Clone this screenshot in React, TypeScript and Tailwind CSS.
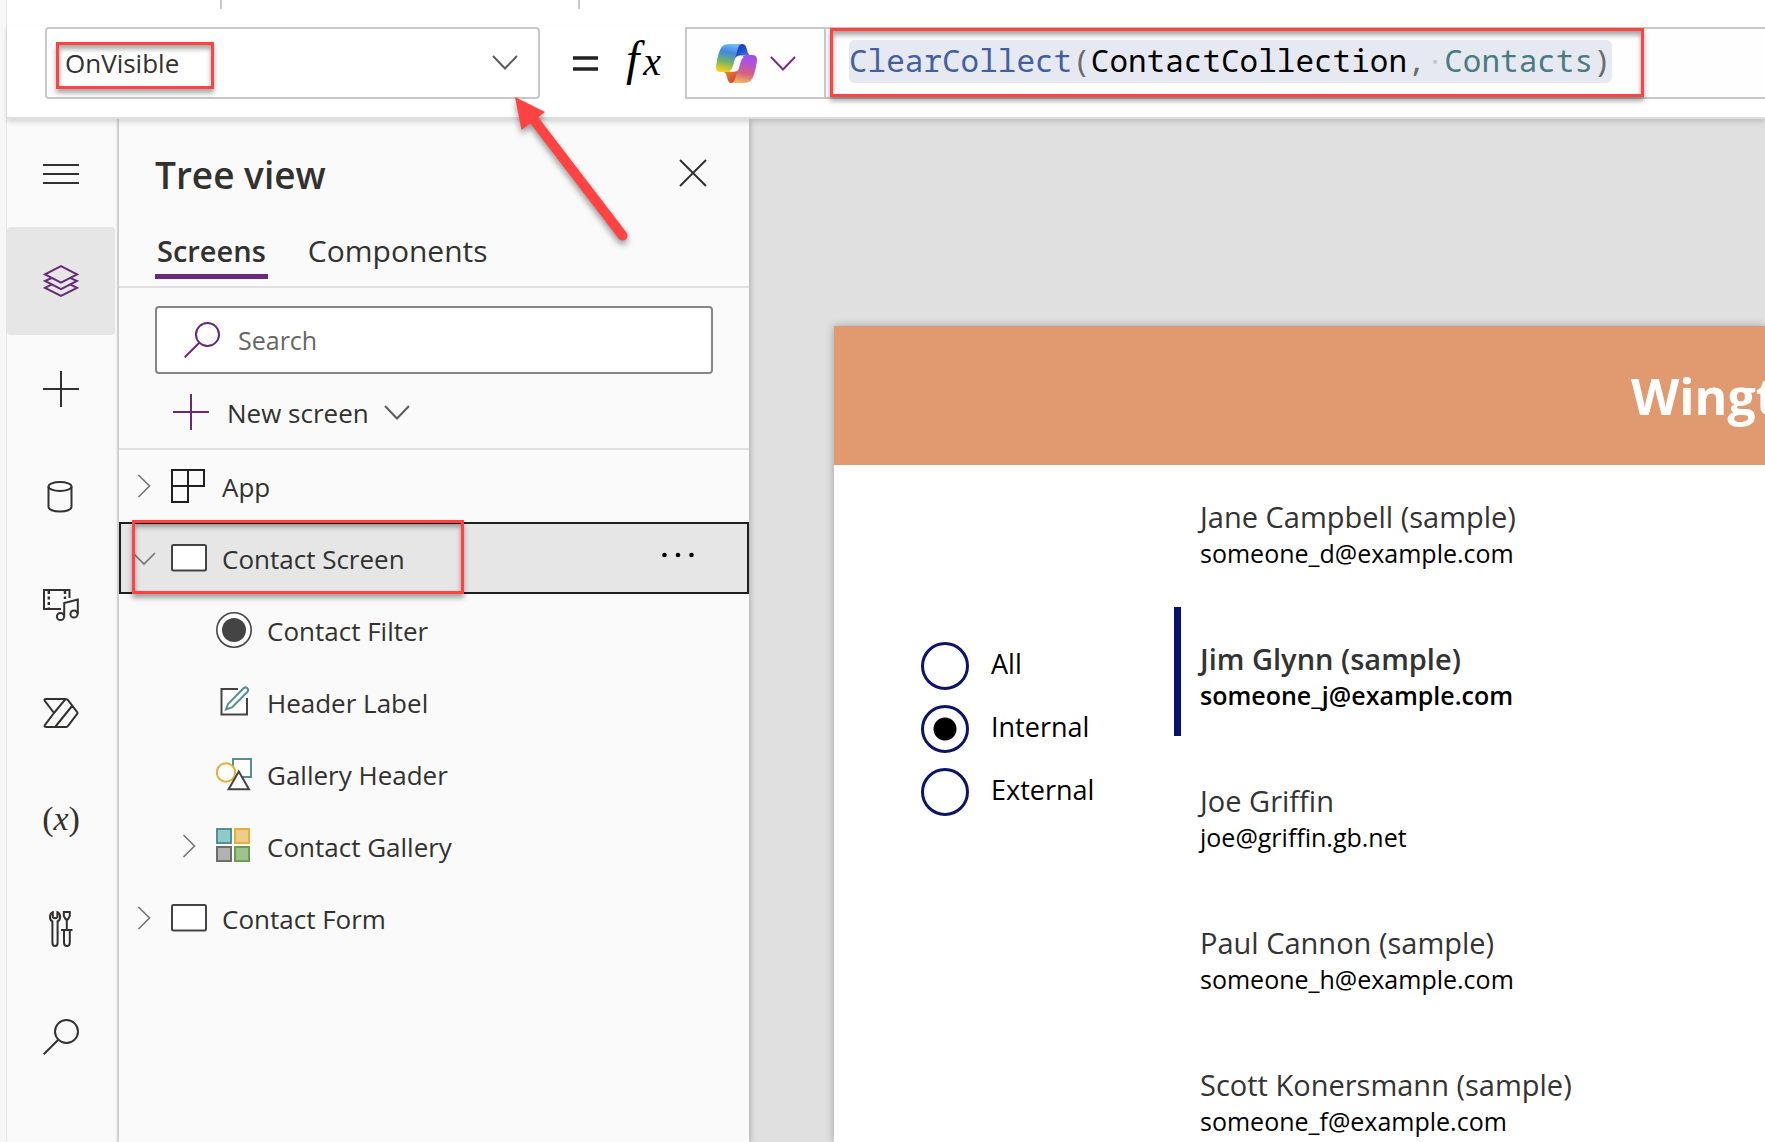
import React from "react";

type IconProps = { className?: string };

function Svg({ w, h, className = "", children }: { w: number; h: number; className?: string; children: React.ReactNode }) {
  return (
    <svg
      width={w}
      height={h}
      viewBox={`0 0 ${w} ${h}`}
      fill="none"
      stroke="currentColor"
      strokeWidth="2"
      aria-hidden="true"
      className={"shrink-0 " + className}
    >
      {children}
    </svg>
  );
}

const MenuIcon = () => (
  <Svg w={36} h={36}>
    <path d="M0 10H36M0 19H36M0 28H36" />
  </Svg>
);

const LayersIcon = () => (
  <Svg w={36} h={36}>
    <path d="M18 3.2L34 11.4L18 19.6L2 11.4Z" />
    <path d="M9 14.8L2 18L18 26.2L34 18L27 14.8" />
    <path d="M9 21.4L2 24.8L18 33L34 24.8L27 21.4" />
  </Svg>
);

const PlusIcon = ({ className = "" }: IconProps) => (
  <Svg w={36} h={36} className={className}>
    <path d="M0 18H36M18 0V36" />
  </Svg>
);

const DatabaseIcon = () => (
  <Svg w={36} h={36}>
    <ellipse cx="17" cy="7.5" rx="11.5" ry="4.5" />
    <path d="M5.500 7.500V28C5.500 30.600 10.600 32.500 17 32.500S28.500 30.600 28.500 28V7.500" />
  </Svg>
);

const MediaIcon = () => (
  <Svg w={36} h={36}>
    <path d="M18 22H1V3H26.500V11" />
    <path d="M5.800 4V22M22 4V12" strokeDasharray="3 2.500" strokeWidth="2.400" />
    <circle cx="17.500" cy="29.500" r="3.600" />
    <circle cx="31" cy="27" r="3.600" />
    <path d="M21.200 29.500V16L34.800 12.600V27" />
  </Svg>
);

const FlowIcon = () => (
  <Svg w={36} h={36}>
    <path
      d="M3 4H22.500Q24 4 25 5.200L34 16.800Q35 18 34 19.200L25 30.800Q24 32 22.500 32H3Q.6 32 2 29.800L11 18L2 6.200Q.6 4 3 4ZM11 18L22.500 4.200M12.500 31.500L29 11"
      strokeLinejoin="round"
    />
  </Svg>
);

const ToolsIcon = () => (
  <Svg w={36} h={36}>
    <path d="M9.800 1.200C5.900 3.200 6.200 8.600 9.400 10.400V31.500Q9.400 35 12 35T14.600 31.500V10.400C18 8.600 18.100 3.200 14.400 1.200V6.200Q12 8.200 9.800 6.200Z" />
    <path d="M20.800 1H26.800V5L25 8.300H22.600L20.800 5ZM23.800 8.500V19M18 19H29.500M21 19V31.500Q21 35 23.900 35T26.800 31.500V19" />
  </Svg>
);

const SearchIcon = ({ className = "" }: IconProps) => (
  <Svg w={36} h={36} className={className}>
    <circle cx="23.500" cy="12.500" r="11.500" />
    <path d="M15.300 20.700L.7 35.300" />
  </Svg>
);

const ChevronDown = ({ className = "" }: IconProps) => (
  <Svg w={26} h={15} className={className}>
    <path d="M1 1L13 13.500L25 1" />
  </Svg>
);

const TreeChevron = ({ open = false }: { open?: boolean }) => (
  <Svg w={24} h={24} className="text-[#757575]">
    {open ? <path d="M1 7L12 18L23 7" strokeWidth="1.600" /> : <path d="M6.500 1L17.500 12L6.500 23" strokeWidth="1.600" />}
  </Svg>
);

const CloseIcon = () => (
  <Svg w={28} h={28} className="text-[#323130]">
    <path d="M1 1L27 27M27 1L1 27" />
  </Svg>
);

const CopilotIcon = () => (
  <svg width="41" height="39" viewBox="0 0 41 39" aria-hidden="true" className="shrink-0">
    <defs>
      <linearGradient id="ribbonA" x1="0.600" y1="0" x2="0.400" y2="1">
        <stop offset="0" stopColor="#6fbdf7" />
        <stop offset="0.300" stopColor="#4388e0" />
        <stop offset="0.650" stopColor="#6fb46a" />
        <stop offset="1" stopColor="#fbd011" />
      </linearGradient>
      <linearGradient id="foldA" x1="0" y1="0" x2="1" y2="1">
        <stop offset="0" stopColor="#1c2fae" />
        <stop offset="0.500" stopColor="#2450d0" />
        <stop offset="1" stopColor="#4a9bf5" />
      </linearGradient>
      <linearGradient id="ribbonB" x1="0.600" y1="0" x2="0.400" y2="1">
        <stop offset="0" stopColor="#9a4df0" />
        <stop offset="0.300" stopColor="#b455cf" />
        <stop offset="0.650" stopColor="#d8607f" />
        <stop offset="1" stopColor="#f0b660" />
      </linearGradient>
      <linearGradient id="foldB" x1="0" y1="0" x2="1" y2="1">
        <stop offset="0" stopColor="#f0a030" />
        <stop offset="0.600" stopColor="#d65a30" />
        <stop offset="1" stopColor="#c23a3a" />
      </linearGradient>
    </defs>
    <path d="M20 0H26Q29.500 0 30.500 4L32 9Q33 11.500 36 11.500H24Q20.500 11.500 19.500 14L17 12Z" fill="url(#foldA)" />
    <path d="M21 39H15Q12.500 39 11.500 35L10 30Q9 27.500 6 27.500H17Q20.500 27.500 21.500 25L24 27Z" fill="url(#foldB)" />
    <path d="M14 0H26Q23 .5 22 4L17 22Q15.300 28 10 28H5Q-1 28 .2 21Q2 9 5 4Q7 0 14 0Z" fill="url(#ribbonA)" />
    <path d="M27 39H15Q18 38.500 19 35L24 17Q25.700 11 31 11H36Q42 11 40.800 18Q39 30 36 35Q34 39 27 39Z" fill="url(#ribbonB)" />
    <path d="M24 13H28Q26 14 25 17L22.500 25.500Q21.500 27.500 19 27.500H13.500Q16.500 26 17.500 22L19.500 16Q20.500 13 24 13Z" fill="#fff" />
  </svg>
);

const AppIcon = () => (
  <Svg w={36} h={36} className="text-[#201f1e]">
    <path d="M1 2H33V18H1ZM1 18V34H17V2" fill="#fafafa" />
  </Svg>
);

const ScreenIcon = () => (
  <Svg w={36} h={36} className="text-[#444]">
    <rect x="1" y="5" width="34" height="25.500" rx="1.500" fill="#fff" />
  </Svg>
);

const RadioIcon = () => (
  <Svg w={36} h={36} className="text-[#444]">
    <circle cx="18" cy="18" r="17.200" fill="#fff" strokeWidth="1.600" />
    <circle cx="18" cy="18" r="12" fill="#444" stroke="none" />
  </Svg>
);

const LabelIcon = () => (
  <Svg w={36} h={36} className="text-[#444]">
    <path d="M5.500 5H31V30.500H5.500Z" fill="#fff" stroke="none" />
    <path d="M22 5H5.500V30.500H31V14" />
    <path d="M10 25.500L12 20L27.500 4.200Q29.500 2.500 31.300 4.200T31.300 8L16 23.500Z" stroke="#54908f" fill="#fff" />
  </Svg>
);

const ShapesIcon = () => (
  <Svg w={36} h={36} className="text-[#444]">
    <rect x="17" y="3" width="18" height="18" fill="#fff" stroke="#54908f" />
    <circle cx="10" cy="16.500" r="9.200" fill="#fff" stroke="#e3ae3e" />
    <path d="M22.800 15.500L33 33.300H12.600Z" fill="#fff" />
  </Svg>
);

const GalleryIcon = () => (
  <Svg w={36} h={36}>
    <rect x="1" y="1" width="14" height="14" fill="#8fcaca" stroke="#54908f" />
    <rect x="19" y="1" width="14" height="14" fill="#edcd87" stroke="#e3ae3e" />
    <rect x="1" y="19" width="14" height="14" fill="#b1b1b1" stroke="#6d6d6d" />
    <rect x="19" y="19" width="14" height="14" fill="#9dc28d" stroke="#689f48" />
  </Svg>
);

const VariableIcon = () => (
  <span className="pb-1 font-['Liberation_Serif'] text-[34px] leading-none">
    (<i>x</i>)
  </span>
);

const railItems = [
  { label: "Menu", icon: <MenuIcon /> },
  { label: "Tree view", icon: <LayersIcon />, active: true },
  { label: "Insert", icon: <PlusIcon /> },
  { label: "Data", icon: <DatabaseIcon /> },
  { label: "Media", icon: <MediaIcon /> },
  { label: "Power Automate", icon: <FlowIcon /> },
  { label: "Variables", icon: <VariableIcon /> },
  { label: "Advanced tools", icon: <ToolsIcon /> },
  { label: "Search", icon: <SearchIcon /> },
];

/** Red call-out frame drawn over the element it marks. */
const Callout = ({ className }: IconProps) => (
  <span
    className={
      "pointer-events-none absolute z-10 border-3 border-[#ff4343] shadow-[0_4px_5px_rgba(0,0,0,0.35),inset_0_4px_5px_rgba(0,0,0,0.35)] " +
      className
    }
  />
);

function FormulaBar() {
  return (
    <header className="relative z-10 flex h-[93px] shrink-0 items-start border-b-2 border-[#dedede] bg-white pl-[38px] shadow-[0_3px_5px_rgba(0,0,0,0.14)]">
      <div className="relative mt-px flex h-18 w-[495px] items-center rounded border-2 border-[#c8c8c8] bg-white">
        <select aria-label="Property" className="h-full w-full appearance-none bg-transparent pl-[18px] text-[26px] text-[#323130] outline-none">
          <option>OnVisible</option>
        </select>
        <ChevronDown className="pointer-events-none absolute top-[26px] right-[20px] text-[#5c5c5c]" />
        <Callout className="top-[13px] left-[9px] h-[47px] w-[158px]" />
      </div>
      <div className="mt-px flex h-18 w-[145px] items-center pl-[33px]">
        <Svg w={25} h={18} className="text-[#222]">
          <path d="M0 4H25M0 15H25" strokeWidth="3.400" />
        </Svg>
        <span className="ml-7 flex items-baseline gap-1 pb-2 font-['Liberation_Serif'] italic leading-none text-black">
          <span className="text-[48px]">f</span>
          <span className="text-[40px]">x</span>
        </span>
      </div>
      <div className="mt-px flex h-18 min-w-0 flex-1 border-2 border-r-0 border-[#c8c8c8] bg-[#fefefe]">
        <button aria-label="Copilot" className="flex w-[139px] shrink-0 items-center gap-[13px] border-r-2 border-[#c8c8c8] pl-[29px]">
          <CopilotIcon />
          <ChevronDown className="text-[#7b2a90]" />
        </button>
        <div className="relative flex items-start pl-[23px]">
          <div
            role="textbox"
            aria-label="Formula"
            className="mt-[11px] h-[43px] rounded-md bg-[#e6e9f1] font-['Noto_Sans_Mono','Liberation_Mono',monospace] text-[31px] leading-[41px] whitespace-nowrap text-black"
          >
            <span className="text-[#425fa0]">ClearCollect</span>
            <span className="text-[#6b6b6b]">(</span>
            ContactCollection
            <span className="text-[#6b6b6b]">,</span>
            <span className="text-[#c4c6cb]">·</span>
            <span className="text-[#4a7b82]">Contacts</span>
            <span className="text-[#6b6b6b]">)</span>
          </div>
          <Callout className="-top-px left-1 h-[69px] w-[814px]" />
        </div>
      </div>
    </header>
  );
}

function Rail() {
  return (
    <nav aria-label="App authoring" className="flex w-28 shrink-0 flex-col border-r-2 border-[#dedede] bg-[#fafafa] text-[#323130]">
      {railItems.map((item) => (
        <button
          key={item.label}
          aria-label={item.label}
          className={"flex h-27 w-27 shrink-0 items-center justify-center rounded " + (item.active ? "bg-[#e6e6e6] text-[#68297a]" : "")}
        >
          {item.icon}
        </button>
      ))}
    </nav>
  );
}

type Node = { name: string; icon: React.ReactNode; child?: boolean; chevron?: "open" | "closed"; selected?: boolean };

const nodes: Node[] = [
  { name: "App", icon: <AppIcon />, chevron: "closed" },
  { name: "Contact Screen", icon: <ScreenIcon />, chevron: "open", selected: true },
  { name: "Contact Filter", icon: <RadioIcon />, child: true },
  { name: "Header Label", icon: <LabelIcon />, child: true },
  { name: "Gallery Header", icon: <ShapesIcon />, child: true },
  { name: "Contact Gallery", icon: <GalleryIcon />, child: true, chevron: "closed" },
  { name: "Contact Form", icon: <ScreenIcon />, chevron: "closed" },
];

function TreeRow({ node }: { node: Node }) {
  return (
    <li
      role="treeitem"
      aria-selected={!!node.selected}
      className={
        "relative flex h-18 items-center border-2 " +
        (node.child ? "pl-[56px] " : "pl-[11px] ") +
        (node.selected ? "border-[#201f1e] bg-[#e6e6e6]" : "border-transparent")
      }
    >
      <span className="mr-[15px] flex w-6 shrink-0 items-center">
        {node.chevron && <TreeChevron open={node.chevron === "open"} />}
      </span>
      {node.icon}
      <span className="ml-[15px] flex-1 pt-0.5 text-[26px] leading-9">{node.name}</span>
      {node.selected && (
        <>
          <button aria-label="More actions" className="mr-[53px] pb-1.5">
            <svg width="32" height="6" viewBox="0 0 32 6" aria-hidden="true">
              <circle cx="2.500" cy="3" r="2.300" />
              <circle cx="16" cy="3" r="2.300" />
              <circle cx="29.500" cy="3" r="2.300" />
            </svg>
          </button>
          <Callout className="-top-1 left-[11px] h-[74px] w-[332px]" />
        </>
      )}
    </li>
  );
}

function TreePanel() {
  return (
    <aside className="z-[5] flex w-[630px] shrink-0 flex-col bg-[#fafafa] text-[#323130] shadow-[1px_0_6px_rgba(0,0,0,0.25)]">
      <div className="flex h-[108px] items-center justify-between pr-[42px] pl-9">
        <h1 className="pt-1 text-[37px] font-semibold">Tree view</h1>
        <button aria-label="Close">
          <CloseIcon />
        </button>
      </div>
      <div role="tablist" className="flex h-[61px] items-start gap-10 border-b-2 border-[#e0e0e0] pl-9 text-[30px] leading-[48px]">
        <button role="tab" aria-selected="true" className="h-[52px] border-b-5 border-[#68297a] px-0.5 text-[29px] font-semibold">
          Screens
        </button>
        <button role="tab" aria-selected="false">
          Components
        </button>
      </div>
      <div className="border-b-2 border-[#e0e0e0] px-9 pt-[18px]">
        <label className="flex h-[68px] items-center rounded border-2 border-[#868686] bg-white pl-[27px]">
          <SearchIcon className="text-[#68297a]" />
          <input
            type="text"
            aria-label="Search"
            placeholder="Search"
            className="ml-[18px] min-w-0 flex-1 bg-transparent pt-0.5 text-[25px] outline-none placeholder:text-[#666]"
          />
        </label>
        <button className="flex h-[74px] items-center pt-0.5 pl-[18px] text-[26px]">
          <PlusIcon className="text-[#68297a]" />
          <span className="ml-[18px] pt-0.5">New screen</span>
          <ChevronDown className="ml-[15px] text-[#5c5c5c]" />
        </button>
      </div>
      <ul role="tree">
        {nodes.map((n) => (
          <TreeRow key={n.name} node={n} />
        ))}
      </ul>
    </aside>
  );
}

const contacts = [
  { name: "Jane Campbell (sample)", email: "someone_d@example.com" },
  { name: "Jim Glynn (sample)", email: "someone_j@example.com", current: true },
  { name: "Joe Griffin", email: "joe@griffin.gb.net" },
  { name: "Paul Cannon (sample)", email: "someone_h@example.com" },
  { name: "Scott Konersmann (sample)", email: "someone_f@example.com" },
];

function AppCanvas() {
  return (
    <main className="min-w-0 flex-1 overflow-hidden bg-[#e0e0e0] pt-[207px] pl-[85px]">
      <div className="h-full bg-white shadow-[0_0_8px_rgba(0,0,0,0.3)]">
        <div className="flex h-[139px] items-center overflow-hidden bg-[#e19a70] pl-[797px]">
          <h2 className="text-[50px] leading-none font-bold whitespace-nowrap text-white">Wingtip Toys</h2>
        </div>
        <div className="flex">
          <fieldset className="flex w-[340px] shrink-0 flex-col gap-4 pt-[177px] pl-[87px]">
            {["All", "Internal", "External"].map((option) => (
              <label key={option} className="flex h-[47px] items-center text-[27px] leading-none text-black">
                <input
                  type="radio"
                  name="filter"
                  defaultChecked={option === "Internal"}
                  className="mr-[22px] h-12 w-12 shrink-0 appearance-none rounded-full border-3 border-[#0b1469] bg-white checked:bg-[radial-gradient(circle,#000_11px,transparent_12px)]"
                />
                <span className="pb-1">{option}</span>
              </label>
            ))}
          </fieldset>
          <ul className="min-w-0 flex-1">
            {contacts.map((c) => (
              <li
                key={c.name}
                className={"flex h-[142px] items-start " + (c.current ? "font-semibold" : "")}
              >
                <span className={"h-[129px] w-[7px] shrink-0 " + (c.current ? "bg-[#0a0f6b]" : "")} />
                <div className="pt-[34px] pl-[19px] whitespace-nowrap">
                  <p className="text-[29px] leading-[36px] text-[#333]">{c.name}</p>
                  <p className="text-[25px] leading-[36px] text-black">{c.email}</p>
                </div>
              </li>
            ))}
          </ul>
        </div>
      </div>
    </main>
  );
}

export default function App() {
  return (
    <div className="relative flex h-screen overflow-hidden bg-[#f7f7f7] pl-1.5 font-['Open_Sans',sans-serif]">
      <div className="flex min-w-0 flex-1 flex-col border-l border-[#e5e5e5] bg-white">
        <div className="flex h-[26px] shrink-0 items-start">
          <span className="ml-[213px] h-[9px] w-0.5 bg-[#c8c8c8]" />
          <span className="ml-[356px] h-[9px] w-0.5 bg-[#c8c8c8]" />
        </div>
        <FormulaBar />
        <div className="flex min-h-0 flex-1">
          <Rail />
          <TreePanel />
          <AppCanvas />
        </div>
      </div>
      <svg
        width="120"
        height="150"
        viewBox="0 0 120 150"
        aria-hidden="true"
        className="pointer-events-none absolute top-[95px] left-[513px] z-20 drop-shadow-[0_4px_3px_rgba(0,0,0,0.4)]"
      >
        <path d="M2 2L32 17L8.500 35Z" fill="#ff4343" />
        <path d="M18 21L109.500 140.500" stroke="#ff4343" strokeWidth="10" strokeLinecap="round" />
      </svg>
    </div>
  );
}
